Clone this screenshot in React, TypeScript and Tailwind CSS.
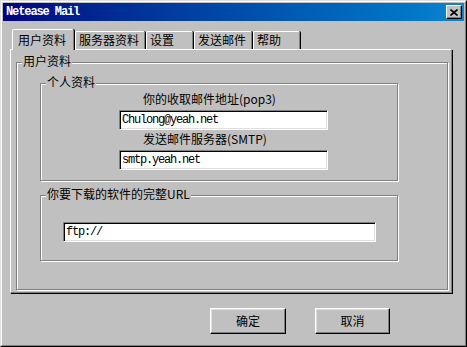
const tabs = [
  { label: "用户资料", w: "w-[62px]", active: true },
  { label: "服务器资料", w: "w-[70px]", active: false },
  { label: "设置", w: "w-[47px]", active: false },
  { label: "发送邮件", w: "w-[58px]", active: false },
  { label: "帮助", w: "w-[47px]", active: false },
];

const TextBox = ({ value, className }: { value: string; className: string }) => (
  <div
    className={`h-[20px] bg-white border border-t-[#808080] border-l-[#808080] border-r-white border-b-white shadow-[inset_1px_1px_0_#000,inset_-1px_-1px_0_#dfdfdf] pl-[2px] leading-[18px] font-['Liberation_Mono',monospace] text-[12px] tracking-[-1.2px] ${className}`}
  >
    {value}
  </div>
);

const GroupLabel = ({ children }: { children: string }) => (
  <span className="absolute top-[-9px] left-[5px] px-px bg-[#c0c0c0] leading-[14px] whitespace-nowrap">
    {children}
  </span>
);

const Button = ({ label, w }: { label: string; w: string }) => (
  <div
    className={`${w} h-[26px] flex items-center justify-center border border-t-white border-l-white border-r-black border-b-black shadow-[inset_-1px_-1px_0_#808080,inset_1px_1px_0_#dfdfdf]`}
  >
    {label}
  </div>
);

export default function App() {
  return (
    <div className="w-[467px] h-[347px] bg-[#c0c0c0] border border-t-[#dfdfdf] border-l-[#dfdfdf] border-r-black border-b-black text-black text-[12px] font-['Noto_Sans_CJK_SC',sans-serif]">
      <div className="h-full flex flex-col p-px border border-t-white border-l-white border-r-[#808080] border-b-[#808080]">
        {/* title bar */}
        <div className="h-[18px] flex items-center bg-linear-to-r from-[#000080] to-[#1084d0]">
          <span className="pl-[3px] text-white font-bold font-['Liberation_Mono',monospace] text-[12px] tracking-[-1.1px]">
            Netease Mail
          </span>
          <div className="ml-auto mr-[2px] w-[16px] h-[14px] flex items-center justify-center bg-[#c0c0c0] border border-t-white border-l-white border-r-black border-b-black shadow-[inset_-1px_-1px_0_#808080]">
            <svg width="8" height="7" viewBox="0 0 8 7">
              <path d="M0.5 0.5 L7.5 6.5 M7.5 0.5 L0.5 6.5" stroke="#000" strokeWidth="1.6" />
            </svg>
          </div>
        </div>

        {/* tabs */}
        <div className="mt-[8px] ml-[7px] w-[442px]">
          <div className="h-[20px] flex items-end gap-px pl-[2px]">
            {tabs.map((t) =>
              t.active ? (
                <div
                  key={t.label}
                  className={`${t.w} h-[21px] mb-[-1px] relative z-10 bg-[#c0c0c0] pl-[5px] pt-[3px] leading-[14px] border-t border-l border-r border-t-white border-l-white border-r-[#808080] shadow-[1px_0_0_#000] rounded-t-[2px]`}
                >
                  {t.label}
                </div>
              ) : (
                <div
                  key={t.label}
                  className={`${t.w} h-[18px] pl-[3px] pt-px leading-[14px] border-t border-l border-r border-t-white border-l-white border-r-[#808080] shadow-[1px_0_0_#000] rounded-t-[2px]`}
                >
                  {t.label}
                </div>
              )
            )}
          </div>

          {/* panel */}
          <div className="w-[442px] h-[244px] border border-t-white border-l-white border-r-[#808080] border-b-[#808080] shadow-[1px_1px_0_#000]">
            <div className="relative ml-[5px] mt-[12px] w-[432px] h-[228px] border border-[#808080] shadow-[inset_1px_1px_0_#fff,1px_1px_0_#fff]">
              <GroupLabel>用户资料</GroupLabel>

              <div className="relative ml-[23px] mt-[20px] w-[358px] h-[98px] flex flex-col border border-[#808080] shadow-[inset_1px_1px_0_#fff,1px_1px_0_#fff]">
                <GroupLabel>个人资料</GroupLabel>
                <div className="mt-[8px] pl-[102px] leading-[14px]">你的收取邮件地址(pop3)</div>
                <TextBox value="Chulong@yeah.net" className="mt-[4px] ml-[78px] w-[209px]" />
                <div className="mt-[2px] pl-[102px] leading-[14px]">发送邮件服务器(SMTP)</div>
                <TextBox value="smtp.yeah.net" className="mt-[4px] ml-[78px] w-[209px]" />
              </div>

              <div className="relative ml-[23px] mt-[14px] w-[358px] h-[66px] flex flex-col border border-[#808080] shadow-[inset_1px_1px_0_#fff,1px_1px_0_#fff]">
                <GroupLabel>你要下载的软件的完整URL</GroupLabel>
                <TextBox value="ftp://" className="mt-[26px] ml-[22px] w-[313px]" />
              </div>
            </div>
          </div>
        </div>

        {/* buttons */}
        <div className="mt-[15px] ml-[207px] flex gap-[29px]">
          <Button label="确定" w="w-[76px]" />
          <Button label="取消" w="w-[75px]" />
        </div>
      </div>
    </div>
  );
}
